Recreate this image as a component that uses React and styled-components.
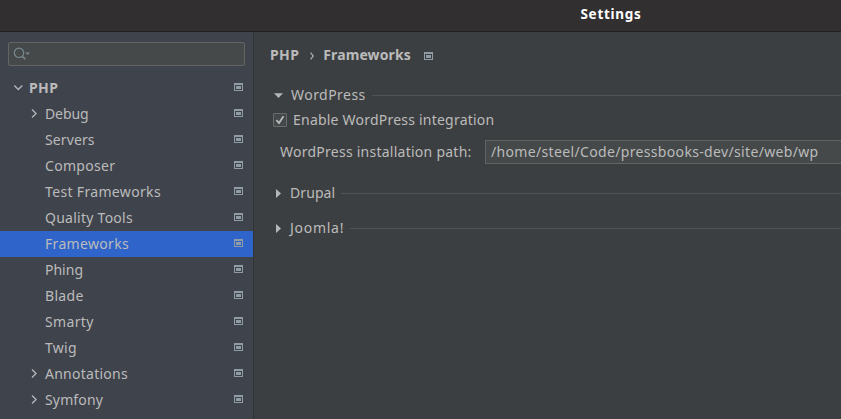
import React from 'react';
import styled, { createGlobalStyle } from 'styled-components';

const GlobalStyle = createGlobalStyle`
  * { box-sizing: border-box; }
  body {
    margin: 0;
    overflow: hidden;
    background: #3c3f41;
    color: #bbbbbb;
    font: 14px/26px "Noto Sans", "Open Sans", sans-serif;
  }
`;

const Window = styled.div`
  display: flex;
  flex-direction: column;
  width: 841px;
  height: 419px;
  overflow: hidden;
`;

const TitleBar = styled.header`
  flex: none;
  height: 32px;
  padding-left: 381px;
  border-bottom: 1px solid #222121;
  background: #322f30;
  color: #ffffff;
  font-size: 13.5px;
  font-weight: 700;
  line-height: 28px;
  text-align: center;
`;

const Body = styled.div`
  display: flex;
  flex: 1;
  min-height: 0;
`;

const Sidebar = styled.aside`
  flex: none;
  width: 254px;
  padding-top: 10px;
  border-right: 1px solid #323436;
  background: #3f434c;
`;

const SearchField = styled.div`
  display: flex;
  align-items: center;
  height: 24px;
  margin: 0 8px 9px;
  padding-left: 4px;
  border: 1px solid #646464;
  border-radius: 2px;
  background: #45494a;
`;

const TreeRow = styled.div`
  display: flex;
  align-items: center;
  height: 26px;
  padding: 0 10px 0 ${(p) => (p.$root ? 13 : 29)}px;
  background: ${(p) => (p.$selected ? '#2f65ca' : 'transparent')};
`;

const ArrowSlot = styled.span`
  display: flex;
  flex: none;
  align-items: center;
  width: 16px;
  height: 26px;
`;

const Label = styled.span`
  flex: ${(p) => (p.$grow ? 1 : 'none')};
  font-weight: ${(p) => (p.$bold ? 700 : 400)};
  letter-spacing: ${(p) => p.$track || 0}px;
  white-space: pre;
`;

const Icon = styled.svg`
  display: block;
  flex: none;
`;

const ProjectBadge = styled(Icon)`
  margin-bottom: 2px;
`;

const Content = styled.main`
  flex: 1;
  min-width: 0;
`;

const Breadcrumb = styled.div`
  display: flex;
  align-items: center;
  height: 26px;
  margin: 10px 0 14px;
  padding-left: 16px;
`;

const CrumbArrow = styled(Icon)`
  margin: 2px 8px 0 10px;
`;

const CrumbBadge = styled.span`
  margin: 4px 0 0 13px;
`;

const Section = styled.div`
  display: flex;
  align-items: center;
  height: 26px;
  margin-top: ${(p) => p.$gap || 0}px;
  padding-left: 19px;
`;

const SectionArrow = styled.span`
  display: flex;
  flex: none;
  width: ${(p) => (p.$open ? 18 : 17)}px;
`;

const Rule = styled.span`
  flex: 1;
  height: 1px;
  margin-left: 6px;
  background: #515456;
`;

const CheckRow = styled.label`
  display: flex;
  align-items: center;
  height: 26px;
  margin-top: -1px;
  padding-left: 19px;
  gap: 6px;
`;

const CheckBox = styled.span`
  display: flex;
  align-items: center;
  justify-content: center;
  width: 14px;
  height: 14px;
  border: 1px solid #6b6b6b;
  border-radius: 1px;
  background: #43494a;
`;

const PathRow = styled.div`
  display: flex;
  align-items: center;
  height: 24px;
  margin-top: 7px;
  padding-left: 26px;
`;

const PathLabel = styled.span`
  flex: none;
  width: 205px;
`;

const PathField = styled.div`
  flex: 1;
  height: 24px;
  padding-left: 5px;
  border: 1px solid #646464;
  border-right: 0;
  background: #45494a;
  line-height: 22px;
`;

const Badge = () => (
  <ProjectBadge width="9" height="8" viewBox="0 0 9 8" shapeRendering="crispEdges">
    <path fill="#8f9ca5" fillRule="evenodd" d="M0 0H9V8H0ZM1 2V7H8V2ZM2 3H7V6H2Z" />
  </ProjectBadge>
);

const TreeArrow = ({ open }) => (
  <Icon width="10" height="10" viewBox="0 0 10 10" fill="none" stroke="#b2b4b7" strokeWidth="1.4">
    <path d={open ? 'M1.3 2.5L5.3 6.5L9.3 2.5' : 'M3 0.6L7 4.6L3 8.6'} />
  </Icon>
);

const Triangle = ({ open }) => (
  <Icon width="11" height="11" viewBox="0 0 11 11" fill="#b4b6b8">
    <path d={open ? 'M1 3.2H10L5.5 8Z' : 'M3 1L8 5.5L3 10Z'} />
  </Icon>
);

const ITEMS = [
  { text: 'PHP', root: true, open: true, track: 0.4 },
  { text: 'Debug', arrow: true, track: -0.1 },
  { text: 'Servers', track: 0.12 },
  { text: 'Composer', track: 0.3 },
  { text: 'Test Frameworks', track: 0.34 },
  { text: 'Quality Tools', track: 0.26 },
  { text: 'Frameworks', selected: true, track: 0.32 },
  { text: 'Phing', track: 0 },
  { text: 'Blade', track: 0.3 },
  { text: 'Smarty', track: 0.36 },
  { text: 'Twig', track: 0.3 },
  { text: 'Annotations', arrow: true, track: 0.26 },
  { text: 'Symfony', arrow: true, track: 0.15 },
];

export default function App() {
  return (
    <Window>
      <GlobalStyle />
      <TitleBar>
        <Label $bold $track={0.72}>Settings</Label>
      </TitleBar>
      <Body>
        <Sidebar>
          <SearchField>
            <Icon width="18" height="14" viewBox="0 0 18 14" fill="none" stroke="#7b8a91" strokeWidth="1.2">
              <circle cx="6" cy="5.8" r="4.7" />
              <path d="M9.2 9.2L12.3 12.3" strokeWidth="1.6" />
              <path d="M12.3 5.5H17L14.65 8Z" fill="#7b8a91" stroke="none" />
            </Icon>
          </SearchField>
          {ITEMS.map((item) => (
            <TreeRow key={item.text} $root={item.root} $selected={item.selected}>
              <ArrowSlot>{(item.open || item.arrow) && <TreeArrow open={item.open} />}</ArrowSlot>
              <Label $grow $bold={item.root} $track={item.track}>{item.text}</Label>
              <Badge />
            </TreeRow>
          ))}
        </Sidebar>
        <Content>
          <Breadcrumb>
            <Label $bold $track={0.4}>PHP</Label>
            <CrumbArrow width="6" height="8" viewBox="0 0 6 8" fill="none" stroke="#b2b4b7" strokeWidth="1.2">
              <path d="M1.6 0.7L4.2 4L1.6 7.3" />
            </CrumbArrow>
            <Label $bold $track={0.1}>Frameworks</Label>
            <CrumbBadge><Badge /></CrumbBadge>
          </Breadcrumb>
          <Section>
            <SectionArrow $open><Triangle open /></SectionArrow>
            <Label $track={0.46}>WordPress</Label>
            <Rule />
          </Section>
          <CheckRow>
            <CheckBox>
              <Icon width="10" height="10" viewBox="0 0 10 10" fill="none" stroke="#b8babb" strokeWidth="1.8">
                <path d="M1.4 5.2L4 8L8.5 1.2" />
              </Icon>
            </CheckBox>
            <Label $track={0.22}>Enable WordPress integration</Label>
          </CheckRow>
          <PathRow>
            <PathLabel><Label $track={0.25}>WordPress installation path:</Label></PathLabel>
            <PathField><Label $track={0.34}>/home/steel/Code/pressbooks-dev/site/web/wp</Label></PathField>
          </PathRow>
          <Section $gap={16}>
            <SectionArrow><Triangle /></SectionArrow>
            <Label $track={0.08}>Drupal</Label>
            <Rule />
          </Section>
          <Section $gap={9}>
            <SectionArrow><Triangle /></SectionArrow>
            <Label $track={0.72}>Joomla!</Label>
            <Rule />
          </Section>
        </Content>
      </Body>
    </Window>
  );
}
